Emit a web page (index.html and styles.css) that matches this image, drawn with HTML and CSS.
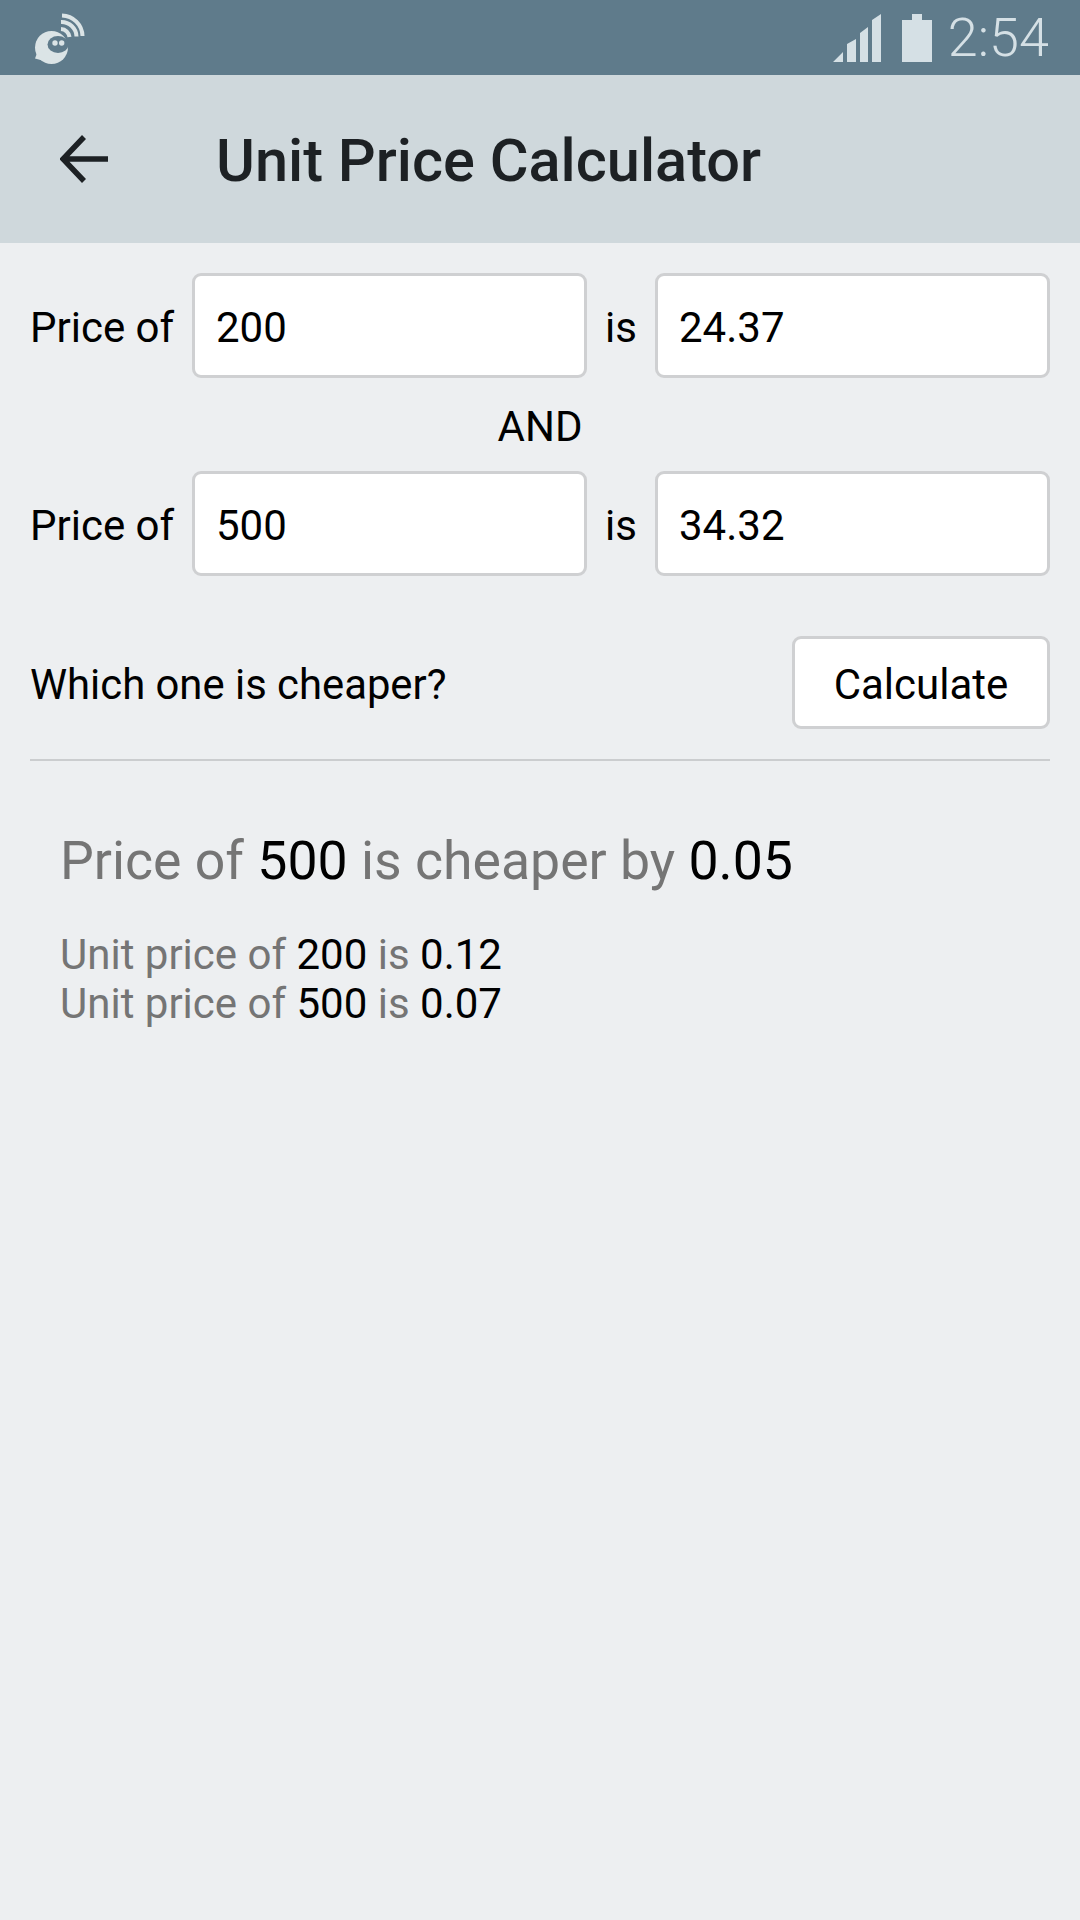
FILE: index.html
```html
<!DOCTYPE html>
<html lang="en">
<head>
  <meta charset="UTF-8">
  <title>Unit Price Calculator</title>
  <link rel="stylesheet" href="styles.css">
</head>
<body>

  <div class="status-bar">
    <svg class="app-icon" width="60" height="60" viewBox="0 0 60 60">
      <circle cx="21.500" cy="39.500" r="16.500" fill="#dbe4e6"/>
      <path d="M5 50.500 L9 40 L18 54Z" fill="#dbe4e6"/>
      <ellipse cx="28" cy="36.500" rx="10.500" ry="8.500" fill="#5f7b8b"/>
      <circle cx="25" cy="35" r="2.700" fill="#dbe4e6"/>
      <circle cx="31.700" cy="35" r="2.700" fill="#dbe4e6"/>
      <g fill="none" stroke="#dbe4e6" stroke-width="4">
        <path d="M32 7.500 A21 21 0 0 1 52.500 28"/>
        <path d="M31 14 A15 15 0 0 1 46.500 28.500"/>
        <path d="M31 21 A9 9 0 0 1 39.500 29"/>
      </g>
    </svg>
    <div class="status-right">
      <svg class="signal" width="48" height="48" viewBox="0 0 48 48">
        <path d="M0 48 L10 38 V48Z M14 30 L23 25 V48 H14Z M27 19 L35 13 V48 H27Z M39 6 L48 0 V48 H39Z" fill="#d5e0e5"/>
      </svg>
      <svg class="battery" width="30" height="48" viewBox="0 0 30 48">
        <path d="M10 0 H20 V6 H30 V48 H0 V6 H10Z" fill="#d5e0e5"/>
      </svg>
      <span class="clock">2:54</span>
    </div>
  </div>

  <div class="toolbar">
    <svg class="back-arrow" width="48" height="48" viewBox="0 0 48 48">
      <path d="M48 24 H4 M24 2 L3 24 L24 46" fill="none" stroke="#1d2124" stroke-width="5.500"/>
    </svg>
    <h1>Unit Price Calculator</h1>
  </div>

  <div class="content">
    <div class="price-row">
      <span class="label">Price of</span>
      <div class="field">200</div>
      <span class="is">is</span>
      <div class="field">24.37</div>
    </div>
    <div class="and">AND</div>
    <div class="price-row">
      <span class="label">Price of</span>
      <div class="field">500</div>
      <span class="is">is</span>
      <div class="field">34.32</div>
    </div>

    <div class="action-row">
      <span class="question">Which one is cheaper?</span>
      <button class="calc-button">Calculate</button>
    </div>

    <div class="result">
      <p class="result-main">Price of <b>500</b> is cheaper by <b>0.05</b></p>
      <p class="result-unit">Unit price of <b>200</b> is <b>0.12</b></p>
      <p class="result-unit">Unit price of <b>500</b> is <b>0.07</b></p>
    </div>
  </div>

</body>
</html>
```

FILE: styles.css
```css
body {
  margin: 0;
  width: 1080px;
  height: 1920px;
  background-color: #edeff1;
  font-family: Roboto, sans-serif;
  color: #000000;
  overflow: hidden;
}
.status-bar {
  height: 75px;
  background-color: #5f7b8b;
  display: flex;
  align-items: center;
  justify-content: space-between;
  padding: 0 31px 0 30px;
}
.status-right { display: flex; align-items: center; }
.signal { margin-right: 21px; }
.battery { margin-right: 16px; }
.clock {
  font-weight: 300;
  font-size: 54px;
  color: #d5e0e5;
}
.toolbar {
  height: 168px;
  background-color: #cfd8dc;
  display: flex;
  align-items: center;
  padding-left: 60px;
}
.back-arrow { margin-right: 108px; }
.toolbar h1 {
  margin: 0;
  padding-top: 3px;
  font-size: 59.500px;
  font-weight: 500;
  color: #1d2124;
}
.content { padding: 30px 30px 0; font-size: 42px; }
.price-row { display: flex; align-items: center; height: 105px; }
.label { width: 162px; padding-top: 3px; }
.is { width: 68px; text-align: center; padding-top: 3px; }
.field {
  width: 395px;
  height: 105px;
  box-sizing: border-box;
  background-color: #ffffff;
  border: 3px solid #cfd0d2;
  border-radius: 9px;
  padding: 4px 0 0 21px;
  display: flex;
  align-items: center;
}
.and { height: 93px; line-height: 97px; text-align: center; }
.action-row {
  display: flex;
  align-items: center;
  justify-content: space-between;
  margin-top: 60px;
  padding-bottom: 30px;
  border-bottom: 2px solid #cbcdcf;
}
.question { padding-top: 3px; font-size: 41.800px; }
.calc-button {
  width: 258px;
  height: 93px;
  padding-top: 5px;
  background-color: #ffffff;
  border: 3px solid #cfd0d2;
  border-radius: 9px;
  font-family: Roboto, sans-serif;
  font-size: 42px;
  color: #000000;
}
.result { padding: 0 30px; color: #757575; }
.result b { font-weight: 400; color: #000000; }
.result p { margin: 0; }
.result-main { font-size: 53.600px; margin-top: 68px !important; margin-bottom: 38px !important; }
.result-unit { font-size: 42px; line-height: 49px; }
```
